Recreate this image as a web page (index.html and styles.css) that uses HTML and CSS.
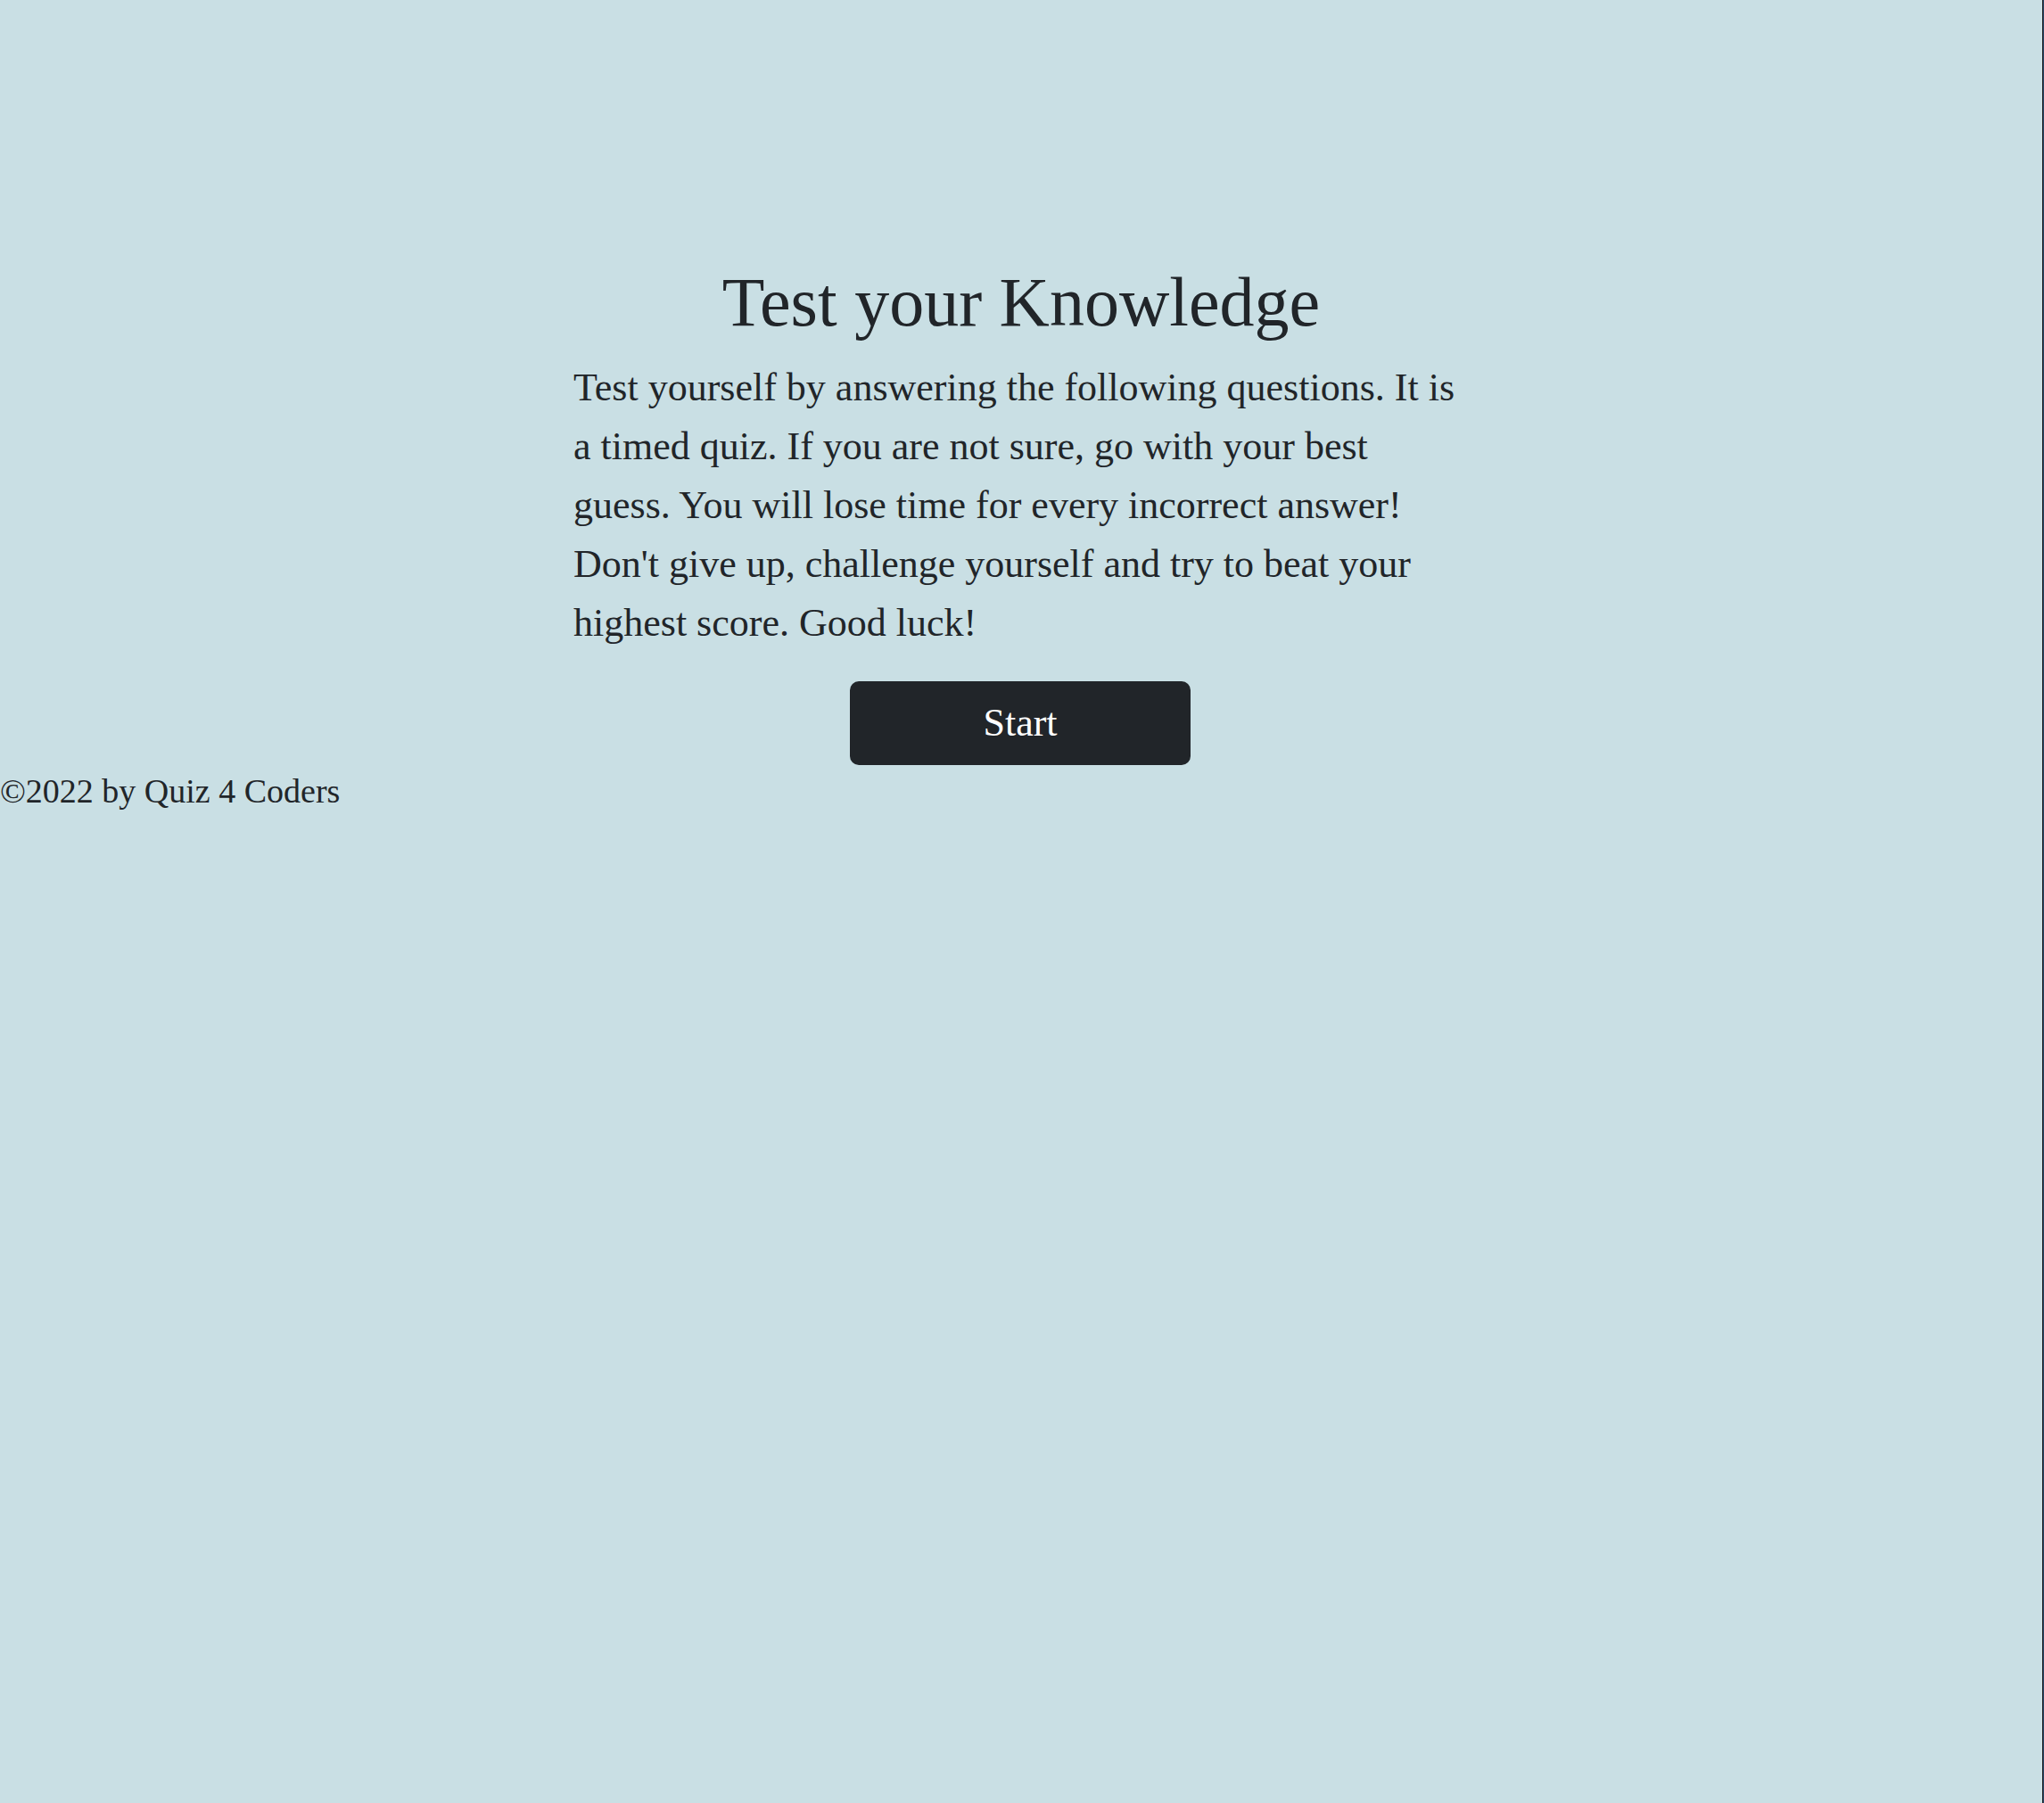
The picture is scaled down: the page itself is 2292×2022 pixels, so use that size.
FILE: index.html
```html
<!DOCTYPE html>
<html lang="en">
<head>
<meta charset="utf-8">
<title>Quiz 4 Coders</title>
<link rel="stylesheet" href="styles.css">
</head>
<body>
<main class="intro">
  <h1 class="intro-title">Test your Knowledge</h1>
  <p class="intro-text">Test yourself by answering the following questions. It is a timed quiz. If you are not sure, go with your best guess. You will lose time for every incorrect answer! Don't give up, challenge yourself and try to beat your highest score. Good luck!</p>
  <button class="start-btn" type="button">Start</button>
</main>
<footer class="site-footer">©2022 by Quiz 4 Coders</footer>
</body>
</html>
```
FILE: styles.css
```css
html {
  background: linear-gradient(to right, #c9dfe4 calc(100% - 2px), #15181c calc(100% - 2px), #15181c calc(100% - 1px), #2c4b6b calc(100% - 1px));
  min-height: 100%;
}
body {
  margin: 0;
  font-family: "Liberation Serif", "Times New Roman", serif;
  color: #212529;
  padding-right: 2px;
}
.intro {
  display: flex;
  flex-direction: column;
  align-items: center;
  padding-top: 292px;
}
.intro-title {
  margin: 0;
  font-size: 78px;
  font-weight: 400;
  line-height: 1.2;
}
.intro-text {
  width: 1004px;
  margin: 16px 0 32px;
  font-size: 44px;
  line-height: 66px;
}
.start-btn {
  width: 382px;
  height: 94px;
  margin-right: 2px;
  border: 0;
  border-radius: 10px;
  background: #212529;
  color: #fff;
  font-family: "Liberation Serif", "Times New Roman", serif;
  font-size: 44px;
  cursor: pointer;
}
.site-footer {
  font-size: 38px;
  line-height: 58px;
}
```
